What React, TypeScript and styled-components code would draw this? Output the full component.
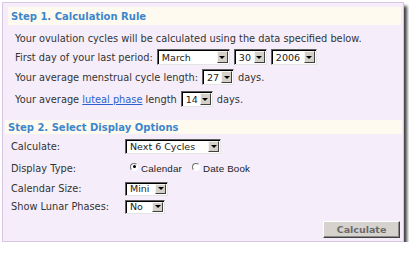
import React from 'react';
import styled, { createGlobalStyle } from 'styled-components';

const GlobalStyle = createGlobalStyle`
  html, body {
    margin: 0;
    padding: 0;
    background: #fff;
  }
  body {
    font-family: "DejaVu Sans", Verdana, sans-serif;
    font-size: 9.8px;
    color: #333;
  }
`;

const Panel = styled.div`
  box-sizing: border-box;
  width: 402px;
  height: 240px;
  margin: 2px 0 0 2px;
  border: 1px solid #d8c6e4;
  background: #f5eefa;
  box-shadow: 3px 4px 3px rgba(0, 0, 0, 0.75);
  display: flex;
  flex-direction: column;
`;

const StepHeader = styled.div<{ $h: number; $ml: number; $mr: number; $mt: number }>`
  height: ${(p) => p.$h}px;
  margin: ${(p) => `${p.$mt}px ${p.$mr}px 0 ${p.$ml}px`};
  padding-left: 3px;
  background: #fffaf0;
  display: flex;
  align-items: center;
  font-size: 10px;
  font-weight: bold;
  color: #3b86cc;
  white-space: nowrap;
`;

const StepOneBody = styled.div`
  padding-left: 12px;
  margin-top: 3px;
  display: flex;
  flex-direction: column;
`;

const Row = styled.div<{ $h: number }>`
  height: ${(p) => p.$h}px;
  display: flex;
  align-items: center;
  gap: 4px;
  white-space: nowrap;
`;

const Link = styled.a`
  color: #2d5fcf;
  text-decoration: underline;
`;

const OptionsGrid = styled.div`
  display: grid;
  grid-template-columns: 114px auto;
  padding-left: 8px;
  margin-top: 1px;
`;

const OptionLabel = styled.div<{ $h: number }>`
  height: ${(p) => p.$h}px;
  display: flex;
  align-items: center;
  white-space: nowrap;
`;

const OptionField = styled.div<{ $h: number }>`
  height: ${(p) => p.$h}px;
  display: flex;
  align-items: center;
`;

const SelectBox = styled.div<{ $w: number; $h: number }>`
  box-sizing: border-box;
  width: ${(p) => p.$w}px;
  height: ${(p) => p.$h}px;
  display: inline-flex;
  align-items: stretch;
  background: #fff;
  border-style: solid;
  border-width: 1px;
  border-color: #606060 #e4e4e4 #e4e4e4 #606060;
  box-shadow: inset 1px 1px 0 #000;
  padding: 1px;
  flex-shrink: 0;
`;

const SelectValue = styled.span`
  flex: 1;
  padding-left: 3px;
  display: flex;
  align-items: center;
  font-size: 9.5px;
  color: #222;
  overflow: hidden;
`;

const ArrowButton = styled.span`
  box-sizing: border-box;
  width: 11px;
  background: #d4d0c8;
  border-style: solid;
  border-width: 1px;
  border-color: #f4f4f4 #404040 #404040 #f4f4f4;
  display: flex;
  align-items: center;
  justify-content: center;

  &::after {
    content: '';
    width: 0;
    height: 0;
    border-left: 3px solid transparent;
    border-right: 3px solid transparent;
    border-top: 3px solid #000;
  }
`;

const RadioGroup = styled.div`
  display: flex;
  align-items: center;
  margin-left: 5px;
  font-family: "Liberation Sans", Arial, sans-serif;
  font-size: 9.8px;
  letter-spacing: 0.15px;
  color: #222;
`;

const RadioOption = styled.label`
  display: flex;
  align-items: center;
  gap: 3px;
  margin-right: 10px;
`;

const RadioCircle = styled.span<{ $checked?: boolean }>`
  box-sizing: border-box;
  width: 8px;
  height: 8px;
  border-radius: 50%;
  border: 1px solid;
  border-color: #707070 #ffffff #ffffff #707070;
  background: #fff;
  display: inline-flex;
  align-items: center;
  justify-content: center;
  margin-top: -3px;

  &::after {
    content: '';
    width: 3px;
    height: 3px;
    border-radius: 50%;
    background: ${(p) => (p.$checked ? '#000' : 'transparent')};
  }
`;

const ButtonRow = styled.div`
  display: flex;
  justify-content: flex-end;
  margin-top: 6px;
  padding-right: 3px;
`;

const CalcButton = styled.button`
  box-sizing: border-box;
  width: 77px;
  height: 17px;
  padding: 0;
  background: #d6d3ce;
  border-style: solid;
  border-width: 1px;
  border-color: #ffffff #404040 #404040 #ffffff;
  box-shadow: inset -1px -1px 0 #8a8a8a;
  font-family: "DejaVu Sans", Verdana, sans-serif;
  font-size: 9.5px;
  font-weight: bold;
  color: #6a6a6a;
`;

const Select = ({ value, w, h }: { value: string; w: number; h: number }) => (
  <SelectBox $w={w} $h={h}>
    <SelectValue>{value}</SelectValue>
    <ArrowButton />
  </SelectBox>
);

export default function App() {
  return (
    <>
      <GlobalStyle />
      <Panel>
        <StepHeader $h={18} $mt={4} $ml={5} $mr={2}>
          Step 1. Calculation Rule
        </StepHeader>
        <StepOneBody>
          <Row $h={20}>Your ovulation cycles will be calculated using the data specified below.</Row>
          <Row $h={18}>
            <span>First day of your last period:</span>
            <Select value="March" w={73} h={16} />
            <Select value="30" w={33} h={16} />
            <Select value="2006" w={46} h={16} />
          </Row>
          <Row $h={22}>
            <span>Your average menstrual cycle length:</span>
            <Select value="27" w={32} h={16} />
            <span>days.</span>
          </Row>
          <Row $h={22}>
            <span>
              Your average <Link href="#">luteal phase</Link> length
            </span>
            <Select value="14" w={32} h={16} />
            <span>days.</span>
          </Row>
        </StepOneBody>
        <StepHeader $h={14} $mt={10} $ml={2} $mr={1}>
          Step 2. Select Display Options
        </StepHeader>
        <OptionsGrid>
          <OptionLabel $h={22}>Calculate:</OptionLabel>
          <OptionField $h={22}>
            <Select value="Next 6 Cycles" w={96} h={15} />
          </OptionField>
          <OptionLabel $h={22}>Display Type:</OptionLabel>
          <OptionField $h={22}>
            <RadioGroup>
              <RadioOption>
                <RadioCircle $checked />
                Calendar
              </RadioOption>
              <RadioOption>
                <RadioCircle />
                Date Book
              </RadioOption>
            </RadioGroup>
          </OptionField>
          <OptionLabel $h={19}>Calendar Size:</OptionLabel>
          <OptionField $h={19}>
            <Select value="Mini" w={43} h={14} />
          </OptionField>
          <OptionLabel $h={17}>Show Lunar Phases:</OptionLabel>
          <OptionField $h={17}>
            <Select value="No" w={40} h={14} />
          </OptionField>
        </OptionsGrid>
        <ButtonRow>
          <CalcButton>Calculate</CalcButton>
        </ButtonRow>
      </Panel>
    </>
  );
}
